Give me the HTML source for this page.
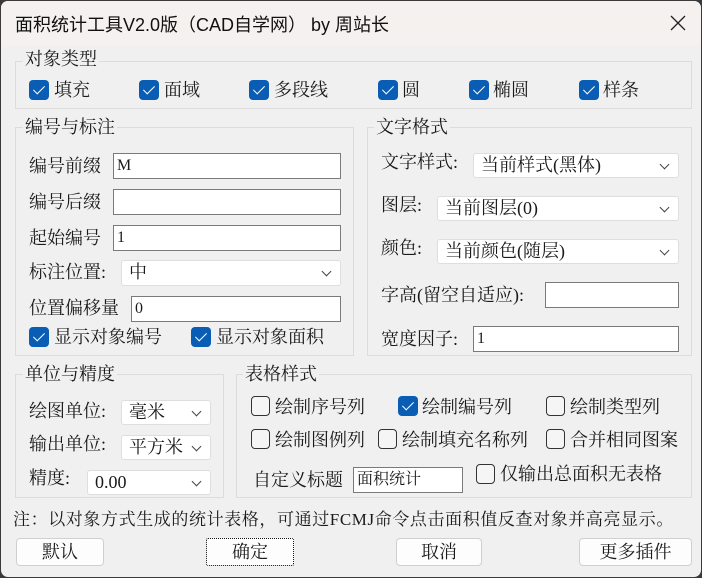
<!DOCTYPE html>
<html><head><meta charset="utf-8"><style>
*{box-sizing:border-box;margin:0;padding:0}
body{width:702px;height:578px;background:#3a3a3a;position:relative;overflow:hidden;font-family:"Liberation Serif","Noto Serif CJK SC",serif;font-size:18px;color:#1a1a1a}
.win{position:absolute;left:1px;top:1px;width:700px;height:576px;background:#f0f0f0;border-radius:7px;overflow:hidden}
.title{position:absolute;left:0;top:0;width:700px;height:44px;background:#f4f1ee}
.title span{position:absolute;left:14px;top:10px;font-family:"Liberation Sans","Noto Sans CJK SC",sans-serif;font-size:18px;color:#111}
.x{position:absolute;left:667px;top:12px;width:20px;height:20px}
.a{position:absolute;white-space:nowrap;line-height:20px}
.g{position:absolute;border:1px solid #dcdcdc}
.gl{position:absolute;background:#f0f0f0;padding:0 2px;line-height:20px;white-space:nowrap}
.in{position:absolute;background:#fff;border:1px solid #7a7a7a;padding-left:3px;line-height:24px;font-size:16px}
.dd{position:absolute;background:#fff;border:1px solid #dedede;border-radius:3px;padding-left:7px;line-height:23px}
.dd:after{content:"";position:absolute;right:10px;top:7px;width:6px;height:6px;border-right:1px solid #444;border-bottom:1px solid #444;transform:rotate(45deg)}
.cb{position:absolute;width:20px;height:20px;border-radius:4px;background:#0a5db4}
.cb:after{content:"";position:absolute;left:7px;top:3px;width:5px;height:10px;border-right:1.5px solid #fff;border-bottom:1.5px solid #fff;transform:rotate(45deg)}
.ub{position:absolute;width:19px;height:20px;border-radius:4px;border:1px solid #333;background:#f5f5f5}
.bt{position:absolute;top:537px;height:28px;background:#fdfdfd;border:1px solid #d0d0d0;border-radius:4px;text-align:center;line-height:26px}
</style></head><body><div class="win">
<div class="title"><span>面积统计工具V2.0版（CAD自学网） by 周站长</span>
<svg class="x" viewBox="0 0 20 20"><path d="M3 3L17 17M17 3L3 17" stroke="#222" stroke-width="1.3"/></svg></div>

<div class="g" style="left:14px;top:60px;width:677px;height:48px"></div><div class="gl" style="left:22px;top:48px">对象类型</div>
<div class="cb" style="left:28px;top:79px"></div><div class="a" style="left:53px;top:79px">填充</div>
<div class="cb" style="left:138px;top:79px"></div><div class="a" style="left:163px;top:79px">面域</div>
<div class="cb" style="left:248px;top:79px"></div><div class="a" style="left:273px;top:79px">多段线</div>
<div class="cb" style="left:377px;top:79px"></div><div class="a" style="left:401px;top:79px">圆</div>
<div class="cb" style="left:468px;top:79px"></div><div class="a" style="left:492px;top:79px">椭圆</div>
<div class="cb" style="left:578px;top:79px"></div><div class="a" style="left:602px;top:79px">样条</div>

<div class="g" style="left:14px;top:126px;width:339px;height:229px"></div><div class="gl" style="left:22px;top:116px">编号与标注</div>
<div class="a" style="left:28px;top:155px">编号前缀</div><div class="in" style="left:112px;top:152px;width:228px;height:26px">M</div>
<div class="a" style="left:28px;top:191px">编号后缀</div><div class="in" style="left:112px;top:188px;width:228px;height:26px"></div>
<div class="a" style="left:28px;top:227px">起始编号</div><div class="in" style="left:112px;top:224px;width:228px;height:26px">1</div>
<div class="a" style="left:28px;top:261px">标注位置:</div><div class="dd" style="left:120px;top:259px;width:220px;height:26px">中</div>
<div class="a" style="left:28px;top:297px">位置偏移量</div><div class="in" style="left:130px;top:295px;width:210px;height:26px">0</div>
<div class="cb" style="left:28px;top:326px"></div><div class="a" style="left:53px;top:326px">显示对象编号</div>
<div class="cb" style="left:190px;top:326px"></div><div class="a" style="left:215px;top:326px">显示对象面积</div>

<div class="g" style="left:366px;top:126px;width:325px;height:229px"></div><div class="gl" style="left:373px;top:116px">文字格式</div>
<div class="a" style="left:380px;top:151px">文字样式:</div><div class="dd" style="left:472px;top:152px;width:206px;height:25px">当前样式(黑体)</div>
<div class="a" style="left:380px;top:194px">图层:</div><div class="dd" style="left:436px;top:195px;width:242px;height:25px">当前图层(0)</div>
<div class="a" style="left:380px;top:237px">颜色:</div><div class="dd" style="left:436px;top:238px;width:242px;height:25px">当前颜色(随层)</div>
<div class="a" style="left:380px;top:284px">字高(留空自适应):</div><div class="in" style="left:544px;top:281px;width:134px;height:26px"></div>
<div class="a" style="left:380px;top:328px">宽度因子:</div><div class="in" style="left:472px;top:325px;width:206px;height:26px">1</div>

<div class="g" style="left:14px;top:373px;width:209px;height:124px"></div><div class="gl" style="left:22px;top:363px">单位与精度</div>
<div class="a" style="left:28px;top:400px">绘图单位:</div><div class="dd" style="left:120px;top:399px;width:90px;height:25px">毫米</div>
<div class="a" style="left:28px;top:433px">输出单位:</div><div class="dd" style="left:120px;top:434px;width:90px;height:25px">平方米</div>
<div class="a" style="left:28px;top:467px">精度:</div><div class="dd" style="left:86px;top:469px;width:124px;height:25px">0.00</div>

<div class="g" style="left:235px;top:373px;width:456px;height:124px"></div><div class="gl" style="left:242px;top:363px">表格样式</div>
<div class="ub" style="left:250px;top:395px"></div><div class="a" style="left:274px;top:396px">绘制序号列</div>
<div class="cb" style="left:397px;top:395px"></div><div class="a" style="left:421px;top:396px">绘制编号列</div>
<div class="ub" style="left:545px;top:395px"></div><div class="a" style="left:569px;top:396px">绘制类型列</div>
<div class="ub" style="left:250px;top:428px"></div><div class="a" style="left:274px;top:429px">绘制图例列</div>
<div class="ub" style="left:377px;top:428px"></div><div class="a" style="left:401px;top:429px">绘制填充名称列</div>
<div class="ub" style="left:545px;top:428px"></div><div class="a" style="left:569px;top:429px">合并相同图案</div>
<div class="a" style="left:252px;top:469px">自定义标题</div><div class="in" style="left:352px;top:466px;width:110px;height:26px">面积统计</div>
<div class="ub" style="left:475px;top:463px"></div><div class="a" style="left:499px;top:463px">仅输出总面积无表格</div>

<div class="a" style="left:12px;top:509px;font-size:17px;letter-spacing:0.6px">注：以对象方式生成的统计表格，可通过FCMJ命令点击面积值反查对象并高亮显示。</div>
<div class="bt" style="left:15px;width:88px">默认</div>
<div class="bt" style="left:205px;width:88px;border:1px dotted #111;border-radius:2px;box-shadow:inset 0 0 0 1px #fff">确定</div>
<div class="bt" style="left:395px;width:86px">取消</div>
<div class="bt" style="left:578px;width:113px">更多插件</div>
</div></body></html>
